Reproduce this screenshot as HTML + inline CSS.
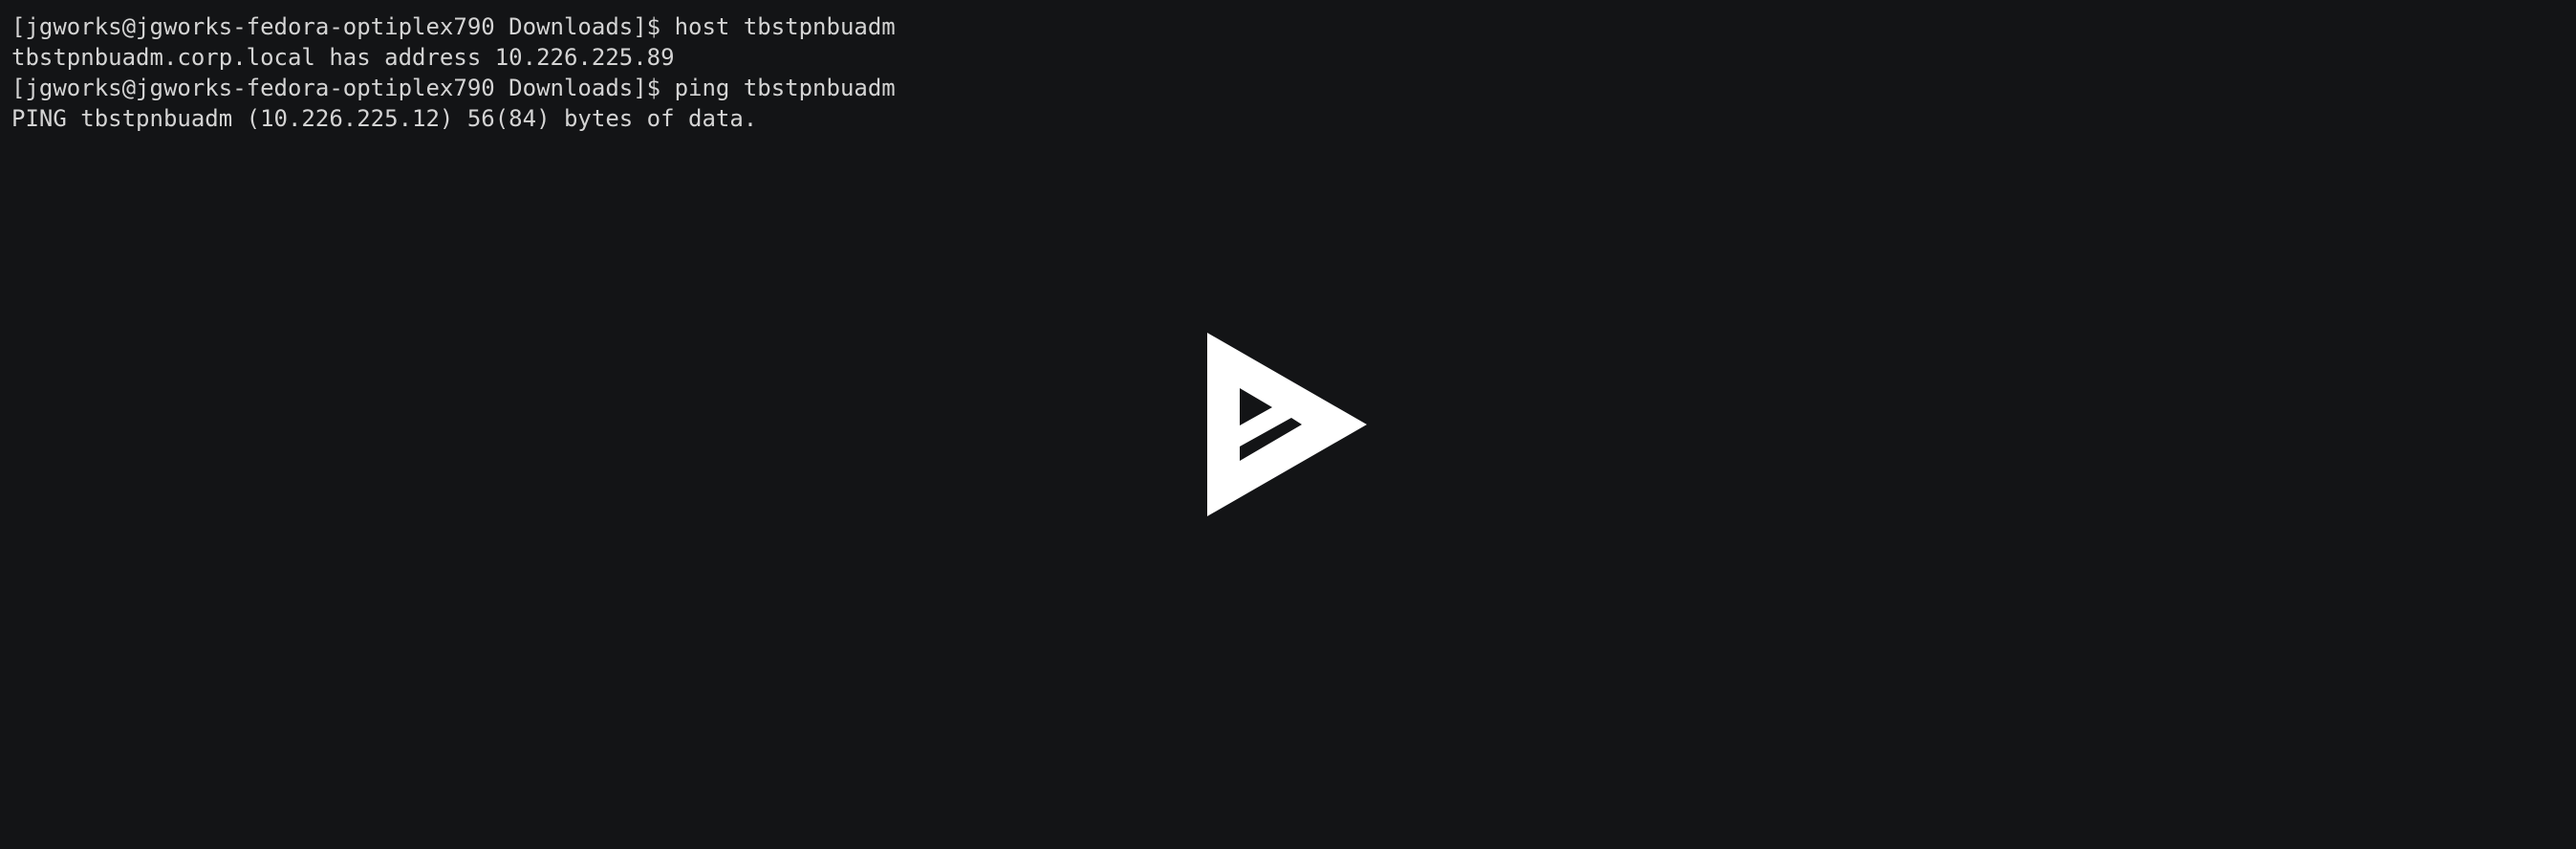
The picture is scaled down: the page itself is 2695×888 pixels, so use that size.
<!DOCTYPE html>
<html><head><meta charset="utf-8"><style>
html,body{margin:0;padding:0;background:#131416;width:2695px;height:888px;overflow:hidden}
pre{position:absolute;left:12px;top:12px;margin:0;font-family:"DejaVu Sans Mono","Liberation Mono",monospace;font-size:24px;line-height:32px;color:#d4d4d4}
svg{position:absolute;left:0;top:0}
</style></head><body>
<pre>[jgworks@jgworks-fedora-optiplex790 Downloads]$ host tbstpnbuadm
tbstpnbuadm.corp.local has address 10.226.225.89
[jgworks@jgworks-fedora-optiplex790 Downloads]$ ping tbstpnbuadm
PING tbstpnbuadm (10.226.225.12) 56(84) bytes of data.</pre>
<svg width="2695" height="888" viewBox="0 0 2695 888">
<path fill="#fff" fill-rule="evenodd" d="M1263 348 L1430 444 L1263 540 Z M1297 406 L1331 426 L1297 445 Z M1297 467 L1351 437 L1362 444 L1297 482 Z"/>
</svg>
</body></html>
